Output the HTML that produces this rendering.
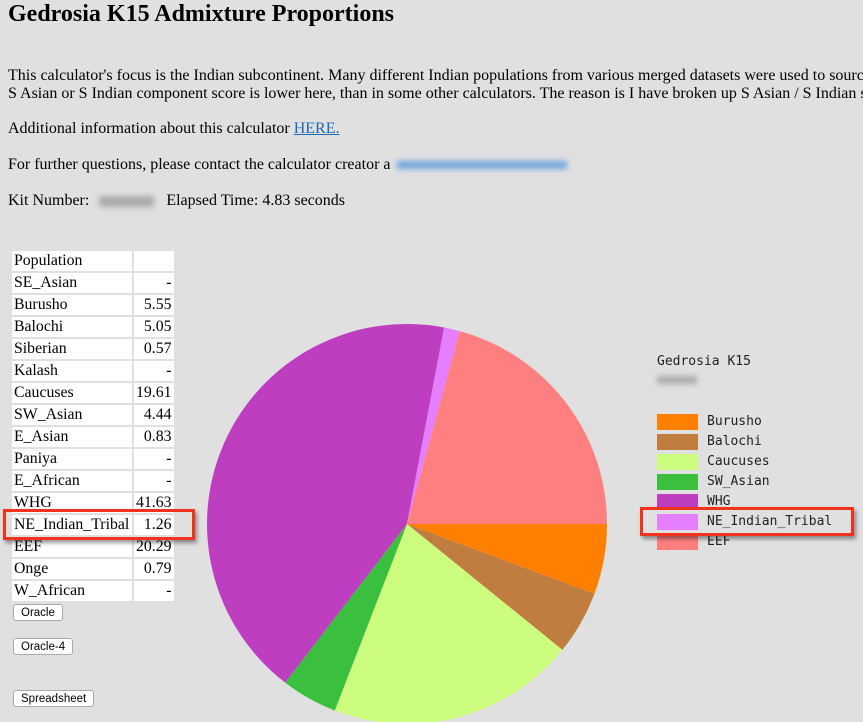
<!DOCTYPE html>
<html><head><meta charset="utf-8"><style>
body{margin:0;width:863px;height:722px;overflow:hidden;background:#e0e0e0;font-family:"Liberation Serif",serif;color:#000;position:relative}
.a{position:absolute;white-space:nowrap}
h1{position:absolute;left:8px;top:1px;margin:0;font-size:24px;font-weight:bold}
p{position:absolute;left:8px;margin:0;font-size:16px;white-space:nowrap;line-height:18px}
a{color:#1a6bb5}
.blur{display:inline-block;filter:blur(3px);vertical-align:middle}
table{position:absolute;left:10px;top:249px;border-spacing:2px;font-size:15.8px}
td{background:#fff;height:20px;padding:0 2px;line-height:20px}
td:first-child{width:116px}td:last-child{width:34px;text-align:right}
button{position:absolute;left:13px;font:11.5px "Liberation Sans",sans-serif;background:#fff;border:1px solid #aaa;border-radius:3px;padding:0 7px;height:17px}
.lg{position:absolute;font:13px "DejaVu Sans Mono","Liberation Mono",monospace;color:#222}
.sw{position:absolute;left:657px;width:41px;height:16px}
.red{position:absolute;border:3px solid #f0321e;box-shadow:2px 3px 4px rgba(0,0,0,.4)}
</style></head><body>
<h1>Gedrosia K15 Admixture Proportions</h1>
<p style="top:67px">This calculator's focus is the Indian subcontinent. Many different Indian populations from various merged datasets were used to source</p>
<p style="top:85px">S Asian or S Indian component score is lower here, than in some other calculators. The reason is I have broken up S Asian / S Indian s</p>
<p style="top:120px">Additional information about this calculator <a href="#">HERE.</a></p>
<p style="top:156px">For further questions, please contact the calculator creator a<span class="blur" style="width:170px;height:8px;background:#6fa5dc;margin-left:6px"></span></p>
<p style="top:192px">Kit Number:<span class="blur" style="width:55px;height:11px;background:#aaa;margin:0 12px 0 10px"></span>Elapsed Time: 4.83 seconds</p>
<table>
<tr><td>Population</td><td></td></tr>
<tr><td>SE_Asian</td><td>-</td></tr>
<tr><td>Burusho</td><td>5.55</td></tr>
<tr><td>Balochi</td><td>5.05</td></tr>
<tr><td>Siberian</td><td>0.57</td></tr>
<tr><td>Kalash</td><td>-</td></tr>
<tr><td>Caucuses</td><td>19.61</td></tr>
<tr><td>SW_Asian</td><td>4.44</td></tr>
<tr><td>E_Asian</td><td>0.83</td></tr>
<tr><td>Paniya</td><td>-</td></tr>
<tr><td>E_African</td><td>-</td></tr>
<tr><td>WHG</td><td>41.63</td></tr>
<tr><td>NE_Indian_Tribal</td><td>1.26</td></tr>
<tr><td>EEF</td><td>20.29</td></tr>
<tr><td>Onge</td><td>0.79</td></tr>
<tr><td>W_African</td><td>-</td></tr>
</table>
<button style="top:604px">Oracle</button>
<button style="top:638px">Oracle-4</button>
<button style="top:690px">Spreadsheet</button>
<div class="red" style="left:3px;top:509px;width:186px;height:25px"></div>
<svg id="pie" class="a" style="left:0;top:0" width="863" height="722"></svg>
<div class="lg" style="left:657px;top:354px">Gedrosia K15</div>
<div class="a" style="left:657px;top:376px;width:40px;height:8px;background:#aaa;filter:blur(3px)"></div>
<div class="sw" style="top:414px;background:#ff8000"></div><div class="lg" style="left:707px;top:414px">Burusho</div>
<div class="sw" style="top:434px;background:#c07d40"></div><div class="lg" style="left:707px;top:434px">Balochi</div>
<div class="sw" style="top:454px;background:#cdfd7f"></div><div class="lg" style="left:707px;top:454px">Caucuses</div>
<div class="sw" style="top:474px;background:#3bbf3f"></div><div class="lg" style="left:707px;top:474px">SW_Asian</div>
<div class="sw" style="top:494px;background:#bd3fbf"></div><div class="lg" style="left:707px;top:494px">WHG</div>
<div class="sw" style="top:514px;background:#e57ffd"></div><div class="lg" style="left:707px;top:514px">NE_Indian_Tribal</div>
<div class="sw" style="top:534px;background:#fe7f7f"></div><div class="lg" style="left:707px;top:534px">EEF</div>
<div class="red" style="left:640px;top:507px;width:208px;height:23px"></div>
<script>
var d=[[5.55,"#ff8000"],[5.05,"#c07d40"],[19.61,"#cdfd7f"],[4.44,"#3bbf3f"],[41.63,"#bd3fbf"],[1.26,"#e57ffd"],[20.29,"#fe7f7f"]];
var t=0;d.forEach(function(x){t+=x[0]});
var cx=407,cy=524,r=200,a=0,s="";
d.forEach(function(x){var b=a+x[0]/t*2*Math.PI;
var x1=cx+r*Math.cos(a),y1=cy+r*Math.sin(a),x2=cx+r*Math.cos(b),y2=cy+r*Math.sin(b);
s+='<path fill="'+x[1]+'" d="M'+cx+' '+cy+'L'+x1+' '+y1+'A'+r+' '+r+' 0 '+((b-a)>Math.PI?1:0)+' 1 '+x2+' '+y2+'Z"/>';a=b;});
document.getElementById("pie").innerHTML=s;
</script>
</body></html>
